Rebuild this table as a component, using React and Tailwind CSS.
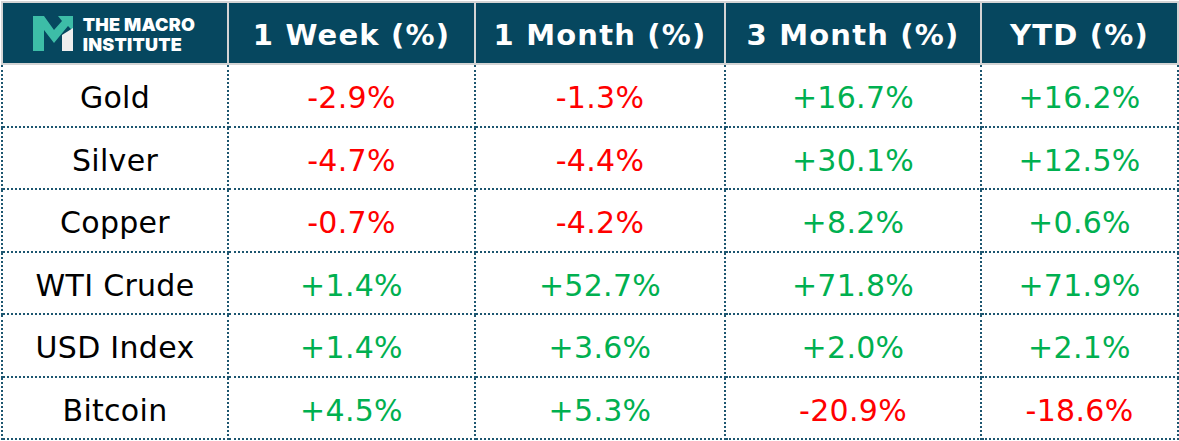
import React from "react";

const rows = [
  ["Gold", "-2.9%", "-1.3%", "+16.7%", "+16.2%"],
  ["Silver", "-4.7%", "-4.4%", "+30.1%", "+12.5%"],
  ["Copper", "-0.7%", "-4.2%", "+8.2%", "+0.6%"],
  ["WTI Crude", "+1.4%", "+52.7%", "+71.8%", "+71.9%"],
  ["USD Index", "+1.4%", "+3.6%", "+2.0%", "+2.1%"],
  ["Bitcoin", "+4.5%", "+5.3%", "-20.9%", "-18.6%"],
];

const heads = ["1 Week (%)", "1 Month (%)", "3 Month (%)", "YTD (%)"];

const Logo = () => (
  <div className="flex items-center gap-[10px]">
    <svg width="40" height="36" viewBox="0 0 40 36">
      <path d="M0 0 H11 L21 14 L29 5 L25 0 H40 V15 L35 10 L21 27 L11 14 V35 H0 Z" fill="#3dbda7" />
      <path d="M29 19 L40 12 V35 H29 Z" fill="#eeeeee" />
    </svg>
    <div className="flex flex-col gap-[1px] text-white font-black text-[18px] leading-[19px] tracking-[0.2px] font-['Inter',sans-serif]">
      <div>THE MACRO</div>
      <div>INSTITUTE</div>
    </div>
  </div>
);

export default function App() {
  return (
    <div className="w-[1179px] h-[441px] bg-white pt-[1px] pl-[1px] font-['DejaVu_Sans','Verdana',sans-serif]">
      <div className="grid grid-cols-[226px_247px_250px_256px_197px] h-[64px] border-l-2 border-t-2 border-[#d4d4d4]">
        <div className="bg-[#06475f] border-r-2 border-b-2 border-[#d4d4d4] flex items-center justify-center pr-[2px] pt-[2px]">
          <Logo />
        </div>
        {heads.map((h) => (
          <div
            key={h}
            className="bg-[#06475f] border-r-2 border-b-2 border-[#d4d4d4] flex items-center justify-center pt-[5px] text-white font-bold text-[29px] tracking-[1.2px]"
          >
            {h}
          </div>
        ))}
      </div>
      {rows.map((r) => (
        <div
          key={r[0]}
          className="grid grid-cols-[226px_247px_250px_256px_197px] h-[62.5px] border-l-2 border-dotted border-[#1d5670]"
        >
          {r.map((c, i) => (
            <div
              key={i}
              className={
                "border-r-2 border-b-2 border-dotted border-[#1d5670] flex items-center justify-center pt-[5px] text-[30px] tracking-[0.3px] " +
                (i === 0 ? "text-black" : c.startsWith("-") ? "text-[#ff0000]" : "text-[#00b050]")
              }
            >
              {c}
            </div>
          ))}
        </div>
      ))}
    </div>
  );
}
